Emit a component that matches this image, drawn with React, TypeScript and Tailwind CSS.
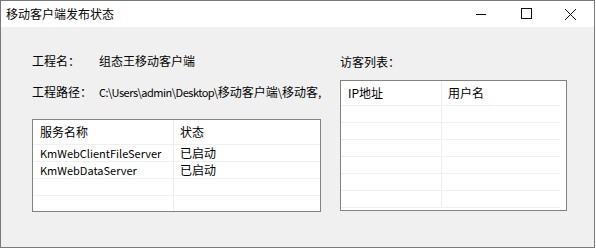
import { ReactNode } from "react";

const font = { fontFamily: '"Noto Sans CJK SC", "Noto Sans", sans-serif' };

function Row({ a, b, header, colA }: { a?: ReactNode; b?: ReactNode; header?: boolean; colA: string }) {
  return (
    <div className={`flex shrink-0 border-b border-[#f0f0f0] ${header ? "h-[25px] text-[12px]" : "h-[17px] text-[11px]"}`}>
      <div className={`${colA} flex items-center pl-[7px] border-r border-[#ececec] whitespace-nowrap overflow-hidden`}>{a}</div>
      <div className="flex-1 flex items-center pl-[6px] whitespace-nowrap overflow-hidden">{b}</div>
    </div>
  );
}

export default function App() {
  return (
    <div className="w-[596px] h-[250px] bg-white text-black" style={font}>
      <div className="w-[595px] h-[248px] border border-[#7a7a7a] flex flex-col">
        {/* Title bar */}
        <div className="h-[26px] bg-white flex items-center shrink-0">
          <div className="pl-[5px] text-[12px] flex-1">移动客户端发布状态</div>
          <div className="flex h-full">
            <div className="w-[45px] flex items-center justify-center">
              <svg width="12" height="12" viewBox="0 0 12 12">
                <path d="M1 6.5h10" stroke="#111" strokeWidth="1" />
              </svg>
            </div>
            <div className="w-[45px] flex items-center justify-center">
              <svg width="12" height="12" viewBox="0 0 12 12">
                <rect x="1.5" y="0.5" width="10" height="10" fill="none" stroke="#111" strokeWidth="1" />
              </svg>
            </div>
            <div className="w-[45px] flex items-center justify-center mr-[1px]">
              <svg width="13" height="13" viewBox="0 0 13 13">
                <path d="M1 1l11 11M12 1L1 12" stroke="#111" strokeWidth="1" />
              </svg>
            </div>
          </div>
        </div>

        {/* Body */}
        <div className="flex-1 bg-[#f0f0f0] flex pl-[31px]">
          {/* Left */}
          <div className="w-[289px] flex flex-col pt-[26px]">
            <div className="flex items-center h-[16px] text-[12px]">
              <span className="w-[67px]">工程名：</span>
              <span>组态王移动客户端</span>
            </div>
            <div className="flex items-center h-[16px] text-[12px] mt-[15px]">
              <span className="w-[67px] shrink-0">工程路径：</span>
              <span className="whitespace-nowrap">
                <span className="text-[11px] tracking-[-0.5px]">C:\Users\admin\Desktop\</span>
                <span>移动客户端</span>
                <span className="text-[11px]">\</span>
                <span>移动客,</span>
              </span>
            </div>
            <div className="mt-[19px] h-[93px] border border-[#828282] bg-white flex flex-col overflow-hidden">
              <Row header colA="w-[141px]" a="服务名称" b="状态" />
              <Row colA="w-[141px]" a="KmWebClientFileServer" b={<span className="text-[12px]">已启动</span>} />
              <Row colA="w-[141px]" a="KmWebDataServer" b={<span className="text-[12px]">已启动</span>} />
              <Row colA="w-[141px]" />
              <Row colA="w-[141px]" />
            </div>
          </div>

          {/* Right */}
          <div className="ml-[19px] w-[227px] flex flex-col pt-[27px]">
            <div className="h-[16px] flex items-center text-[12px]">访客列表：</div>
            <div className="mt-[10px] h-[131px] border border-[#828282] bg-white flex flex-col overflow-hidden pr-[6px]">
              <Row header colA="w-[101px]" a="IP地址" b="用户名" />
              <Row colA="w-[101px]" />
              <Row colA="w-[101px]" />
              <Row colA="w-[101px]" />
              <Row colA="w-[101px]" />
              <Row colA="w-[101px]" />
              <Row colA="w-[101px]" />
            </div>
          </div>
        </div>
      </div>
    </div>
  );
}
